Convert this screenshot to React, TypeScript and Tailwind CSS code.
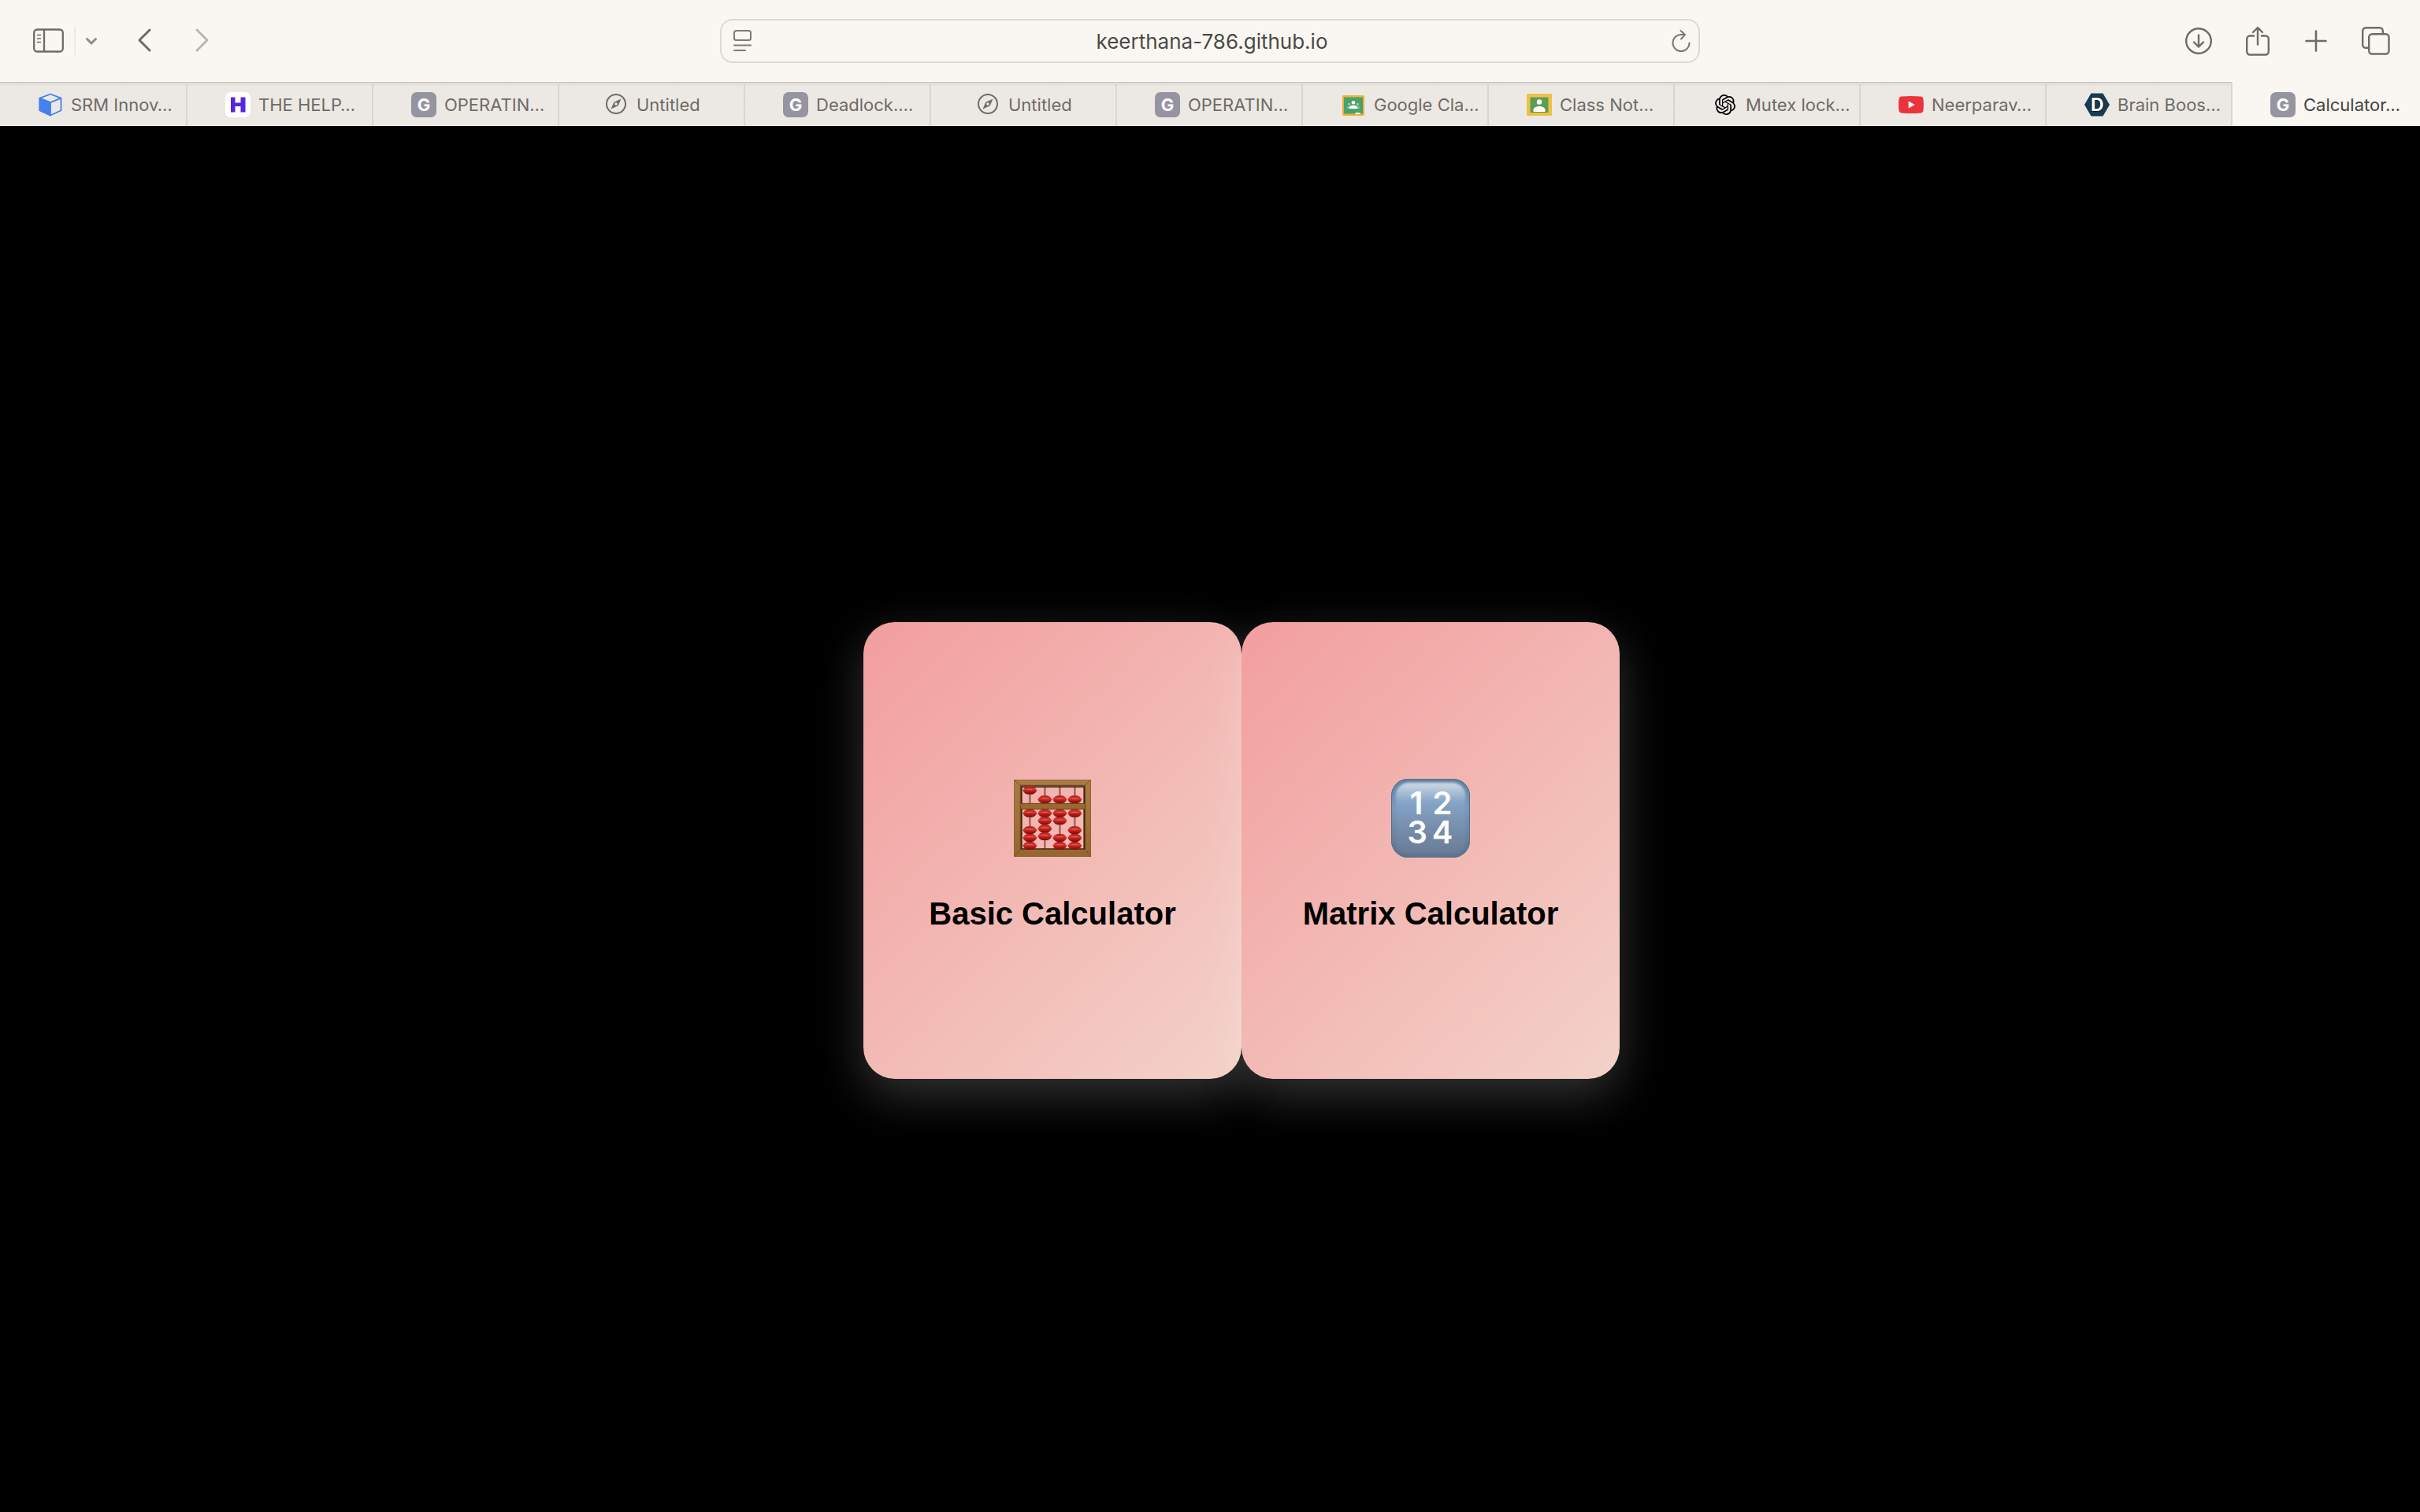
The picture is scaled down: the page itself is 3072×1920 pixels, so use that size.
import React from "react";
import { SiOpenai } from "react-icons/si";

function SidebarIcon() {
  return (
    <svg width="40" height="32" viewBox="0 0 40 32" fill="none" stroke="#6f6b67" strokeWidth="2.300">
      <rect x="1.200" y="1.500" width="36.600" height="28" rx="4" />
      <path d="M14 2v28" />
      <path d="M5.500 8.500h4M5.500 13h4M5.500 17.500h4" strokeWidth="1.600" strokeLinecap="round" />
    </svg>
  );
}

function Chevron({ d, color }: { d: string; color: string }) {
  return (
    <svg width="20" height="32" viewBox="0 0 20 32" fill="none" stroke={color} strokeWidth="3" strokeLinecap="round" strokeLinejoin="round">
      <path d={d} />
    </svg>
  );
}

function PageIcon() {
  return (
    <svg width="24" height="28" viewBox="0 0 24 28" fill="none" stroke="#7d7a77" strokeWidth="2" strokeLinecap="round">
      <rect x="1" y="1" width="21" height="12" rx="2.500" />
      <path d="M1 19.500h21M1 26h14" />
    </svg>
  );
}

function ReloadIcon() {
  return (
    <svg width="24" height="28" viewBox="0 0 24 28" fill="none" stroke="#7d7a77" strokeWidth="2" strokeLinecap="round" strokeLinejoin="round">
      <path d="M22.500 16.500A10.500 10.500 0 1 1 12 6h4.500" />
      <path d="M11.500 1l5.500 5-5 5.500" />
    </svg>
  );
}

function DownloadIcon() {
  return (
    <svg width="36" height="36" viewBox="0 0 36 36" fill="none" stroke="#6f6b67" strokeWidth="2.400" strokeLinecap="round" strokeLinejoin="round">
      <circle cx="18" cy="18" r="15.800" />
      <path d="M18 10.500v15M12 19.500l6 6 6-6" />
    </svg>
  );
}

function ShareIcon() {
  return (
    <svg width="32" height="40" viewBox="0 0 32 40" fill="none" stroke="#6f6b67" strokeWidth="2.400" strokeLinecap="round" strokeLinejoin="round">
      <path d="M11 13.500H6A4 4 0 0 0 2.200 17.500v16A4 4 0 0 0 6.200 37.500h19.600a4 4 0 0 0 4-4v-16a4 4 0 0 0-4-4H21" />
      <path d="M16 24.500V3.500M10 9l6-6 6 6" />
    </svg>
  );
}

function PlusIcon() {
  return (
    <svg width="28" height="28" viewBox="0 0 28 28" fill="none" stroke="#6f6b67" strokeWidth="2.600" strokeLinecap="round">
      <path d="M14 1.500v25M1.500 14h25" />
    </svg>
  );
}

function OverviewIcon() {
  return (
    <svg width="36" height="36" viewBox="0 0 36 36" fill="none" stroke="#6f6b67" strokeWidth="2.400">
      <rect x="9.200" y="9.200" width="25.300" height="25.300" rx="4" />
      <path d="M9 26.800H5.200a4 4 0 0 1-4-4V5.200a4 4 0 0 1 4-4h17.600a4 4 0 0 1 4 4V9" />
    </svg>
  );
}

function LetterG() {
  return (
    <span className="flex h-8 w-8 items-center justify-center rounded-[7px] bg-[#9595a1] text-[22px] leading-8 font-bold text-white">
      G
    </span>
  );
}

function CubeIcon() {
  return (
    <svg width="32" height="32" viewBox="0 0 32 32" fill="none" stroke="#467fee" strokeWidth="1.800" strokeLinejoin="round">
      <path d="M16 2.500l13.500 5.200v15.600L16 29.500 2.500 23.300V7.700z" />
      <path d="M2.500 7.700L16 13.200v16.300L2.500 23.300z" fill="#467fee" />
      <path d="M16 13.200l13.500-5.500" />
    </svg>
  );
}

function HIcon() {
  return (
    <svg width="32" height="32" viewBox="0 0 32 32">
      <rect width="32" height="32" rx="7" fill="#fff" />
      <path d="M7 6.500h5.500v7h7v-7H25.500v19h-6v-7.500h-7v7.500H7z" fill="#5527dd" />
    </svg>
  );
}

function CompassIcon() {
  return (
    <svg width="32" height="32" viewBox="0 0 32 32" fill="none">
      <circle cx="16" cy="15" r="12" stroke="#6f6b67" strokeWidth="2" />
      <path d="M22.500 8.500l-3.800 8.700-9.200 4.300 3.800-8.700z" fill="#6f6b67" />
      <circle cx="16" cy="15" r="1.800" fill="#ece9e4" />
    </svg>
  );
}

function ClassroomIcon() {
  return (
    <svg width="32" height="32" viewBox="0 0 32 32">
      <rect x="2" y="4" width="28" height="26" rx="2" fill="#eab23d" />
      <rect x="4" y="6.500" width="24" height="21" fill="#4ba268" />
      <circle cx="16" cy="13.200" r="2.300" fill="#fff" />
      <path d="M10.500 21v-1c0-2 3-3.200 5.500-3.200s5.500 1.200 5.500 3.200v1z" fill="#fff" />
      <circle cx="10.500" cy="15.200" r="1.500" fill="#a5d0b4" />
      <circle cx="21.500" cy="15.200" r="1.500" fill="#a5d0b4" />
      <path d="M7.500 20.500c0-1.500 1.500-2.500 3-2.500v2.500zM24.500 20.500c0-1.500-1.500-2.500-3-2.500v2.500z" fill="#8cc3a0" />
      <rect x="18.500" y="26" width="6" height="2" fill="#fff" />
    </svg>
  );
}

function ClassNotesIcon() {
  return (
    <svg width="32" height="32" viewBox="0 0 32 32">
      <rect y="2" width="32" height="28" rx="1.500" fill="#edc244" />
      <rect x="4.500" y="6.500" width="23" height="19.500" fill="#5f9c56" />
      <circle cx="16" cy="12.500" r="3.200" fill="#fff" />
      <path d="M8.500 25v-2.500c0-3 4-4.500 7.500-4.500s7.500 1.500 7.500 4.500V25z" fill="#fff" />
    </svg>
  );
}

function YoutubeIcon() {
  return (
    <svg width="32" height="32" viewBox="0 0 32 32">
      <path d="M4 5.500Q16 4.500 28 5.500 31 5.800 31.500 9 32.300 16 31.500 23 31 26.200 28 26.500 16 27.500 4 26.500 1 26.200.500 23-.300 16 .500 9 1 5.800 4 5.500z" fill="#ea333d" />
      <path d="M12.700 11.500v9l8-4.500z" fill="#fff" />
    </svg>
  );
}

function BrainIcon() {
  return (
    <svg width="32" height="32" viewBox="0 0 32 32">
      <path d="M8.500 1.500h15L32 16l-8.500 14.500h-15L0 16z" fill="#183b51" />
      <text x="8" y="24" fontFamily="Inter, sans-serif" fontSize="23" fontWeight="700" fill="#fff" stroke="#0a1c28" strokeWidth="2" paintOrder="stroke">D</text>
    </svg>
  );
}

const tabs = [
  { title: "SRM Innov…", icon: <CubeIcon /> },
  { title: "THE HELP…", icon: <HIcon /> },
  { title: "OPERATIN…", icon: <LetterG /> },
  { title: "Untitled", icon: <CompassIcon /> },
  { title: "Deadlock.…", icon: <LetterG /> },
  { title: "Untitled", icon: <CompassIcon /> },
  { title: "OPERATIN…", icon: <LetterG /> },
  { title: "Google Cla…", icon: <ClassroomIcon /> },
  { title: "Class Not…", icon: <ClassNotesIcon /> },
  { title: "Mutex lock…", icon: <SiOpenai size={26} color="#000" /> },
  { title: "Neerparav…", icon: <YoutubeIcon /> },
  { title: "Brain Boos…", icon: <BrainIcon /> },
  { title: "Calculator…", icon: <LetterG /> },
];

function tabClass(index: number) {
  const base = "h-14 min-w-0 grow overflow-hidden whitespace-nowrap text-[22px] leading-7";
  if (index === tabs.length - 1) {
    return `${base} basis-[4px] bg-[#faf7f2] text-[#454341]`;
  }
  const look = "border-r-2 border-[#d9d6d1] bg-[#ece9e4] bg-linear-to-b from-[#dcd9d4] to-[#ece9e4] to-[6px] shadow-[inset_0_1px_0_#c5c2bc] text-[#6f6b67]";
  return `${base} ${look} ${index === 0 ? "basis-[4px]" : "basis-[2px]"}`;
}

function Toolbar() {
  return (
    <div className="grid h-[104px] grid-cols-[1fr_minmax(0,1244px)_1fr] items-center">
      <div className="flex items-center pl-[42px]">
        <button aria-label="Sidebar"><SidebarIcon /></button>
        <div className="ml-3 h-9 w-[2px] bg-[#ece9e6]"></div>
        <button aria-label="Tab groups" className="ml-[10px]"><Chevron d="M4.500 13.500l5.500 5.500 5.500-5.500" color="#8f8c8a" /></button>
        <button aria-label="Back" className="ml-12"><Chevron d="M16 2L3 15l13 13" color="#6f6b67" /></button>
        <button aria-label="Forward" className="ml-[52px]"><Chevron d="M4 2l13 13L4 28" color="#b9b6b2" /></button>
      </div>
      <div className="flex h-14 items-center rounded-2xl border-2 border-[#dddad5] pr-[10px] pl-[15px]">
        <button aria-label="Page menu"><PageIcon /></button>
        <input
          aria-label="Address"
          className="min-w-0 flex-1 bg-transparent pt-[2px] text-center text-[26px] leading-8 text-[#4a4947] outline-none"
          defaultValue="keerthana-786.github.io"
        />
        <button aria-label="Reload"><ReloadIcon /></button>
      </div>
      <div className="flex items-center justify-end pr-[38px]">
        <button aria-label="Downloads"><DownloadIcon /></button>
        <button aria-label="Share" className="ml-[41px]"><ShareIcon /></button>
        <button aria-label="New tab" className="ml-11"><PlusIcon /></button>
        <button aria-label="Tab overview" className="ml-11"><OverviewIcon /></button>
      </div>
    </div>
  );
}

const beads = [
  [61, 41], [118, 76], [175, 76], [232, 76],
  [61, 128], [118, 128], [175, 128], [232, 128],
  [118, 157], [175, 157], [118, 187], [118, 216],
  [61, 193], [61, 222], [61, 252],
  [175, 222], [175, 252],
  [232, 193], [232, 222], [232, 252],
];

function Abacus() {
  return (
    <svg width="98" height="98" viewBox="0 0 294 294">
      <defs>
        <linearGradient id="bead" x1="0" y1="0" x2="0" y2="1">
          <stop offset="0" stopColor="#a3211c" />
          <stop offset="0.350" stopColor="#dd352c" />
          <stop offset="0.600" stopColor="#b81f1b" />
          <stop offset="1" stopColor="#6b0d10" />
        </linearGradient>
        <linearGradient id="wood" x1="0" y1="0" x2="0" y2="1">
          <stop offset="0" stopColor="#aa7c45" />
          <stop offset="1" stopColor="#966630" />
        </linearGradient>
      </defs>
      {[61, 118, 175, 232].map((x) => (
        <rect key={x} x={x - 4} y="26" width="8" height="240" fill="#a96a5c" />
      ))}
      <path d="M27 25h243v241H27zM32 30v232h233V30z" fill="#45270d" fillRule="evenodd" />
      <path d="M0 0h294v294H0zM25 22v243h246V22z" fill="url(#wood)" fillRule="evenodd" />
      <path d="M1 1h292v292H1z" fill="none" stroke="#86592a" strokeWidth="2" />
      <path d="M25 22h246v243H25z" fill="none" stroke="#55330f" strokeWidth="3" />
      <path d="M0 0l25 22M294 0l-23 22M0 294l25-29M294 294l-23-29" stroke="#6d441b" strokeWidth="2" />
      {beads.map(([x, y]) => (
        <g key={`${x}-${y}`}>
          <path d={`M${x - 27} ${y}Q${x - 20} ${y - 13} ${x - 8} ${y - 15}H${x + 8}Q${x + 20} ${y - 13} ${x + 27} ${y}Q${x + 20} ${y + 13} ${x + 8} ${y + 15}H${x - 8}Q${x - 20} ${y + 13} ${x - 27} ${y}z`} fill="url(#bead)" />
          <ellipse cx={x} cy={y - 4} rx="14" ry="2" fill="#f4756a" opacity="0.600" />
        </g>
      ))}
      <rect x="26" y="90" width="244" height="22" fill="#99692f" />
      <path d="M26 91h244M26 112h244" stroke="#6b421a" strokeWidth="3" />
    </svg>
  );
}

function Numbers() {
  return (
    <svg width="100" height="100" viewBox="0 0 300 300">
      <defs>
        <linearGradient id="key" x1="0" y1="0" x2="0" y2="1">
          <stop offset="0" stopColor="#5f7e9f" />
          <stop offset="0.350" stopColor="#7799bf" />
          <stop offset="1" stopColor="#5d718a" />
        </linearGradient>
        <linearGradient id="face" x1="0" y1="0" x2="0" y2="1">
          <stop offset="0" stopColor="#cfdbe6" />
          <stop offset="0.120" stopColor="#aec2d6" />
          <stop offset="0.280" stopColor="#84a3c7" />
          <stop offset="0.600" stopColor="#7890ae" />
          <stop offset="1" stopColor="#677b95" />
        </linearGradient>
        <filter id="soft"><feGaussianBlur stdDeviation="4" /></filter>
      </defs>
      <rect width="300" height="300" rx="64" fill="url(#key)" />
      <rect x="1.500" y="1.500" width="297" height="297" rx="62" fill="none" stroke="#556f8c" strokeWidth="3" />
      <rect x="17" y="14" width="266" height="272" rx="50" fill="url(#face)" filter="url(#soft)" />
      <text fill="#fff" fontFamily="Inter, sans-serif" fontSize="120" fontWeight="600" textAnchor="middle">
        <tspan x="96" y="135">1</tspan>
        <tspan x="195" y="135">2</tspan>
        <tspan x="100" y="246">3</tspan>
        <tspan x="195" y="246">4</tspan>
      </text>
    </svg>
  );
}

function Card({ title, children }: { title: string; children: React.ReactNode }) {
  return (
    <a
      href="#"
      className="flex h-[580px] w-[480px] flex-col items-center justify-center rounded-[40px] bg-linear-[135deg] from-[#f29e9f] to-[#f3d2c8] pt-3 shadow-[0_20px_60px_rgba(255,255,255,0.2)]"
    >
      <div className="flex h-[100px] items-center">{children}</div>
      <h2 className="mt-12 font-['Liberation_Sans',Arial,sans-serif] text-[40px] leading-[46px] font-bold text-black">{title}</h2>
    </a>
  );
}

export default function App() {
  return (
    <div className="flex min-h-screen flex-col bg-black font-[Inter,sans-serif]">
      <header className="bg-[#faf7f2]">
        <Toolbar />
        <nav className="flex" aria-label="Tabs">
          {tabs.map((tab, i) => (
            <button key={i} className={tabClass(i)}>
              <span className={`flex items-center gap-[10px] pt-[2px] ${tab.title === "Untitled" ? "pl-14" : "pl-12"}`}>
                <span className="flex h-8 w-8 shrink-0 items-center justify-center">{tab.icon}</span>
                <span>{tab.title}</span>
              </span>
            </button>
          ))}
        </nav>
      </header>
      <main className="flex flex-1 items-center justify-center pt-20 pl-20">
        <Card title="Basic Calculator">
          <Abacus />
        </Card>
        <Card title="Matrix Calculator">
          <Numbers />
        </Card>
      </main>
    </div>
  );
}
